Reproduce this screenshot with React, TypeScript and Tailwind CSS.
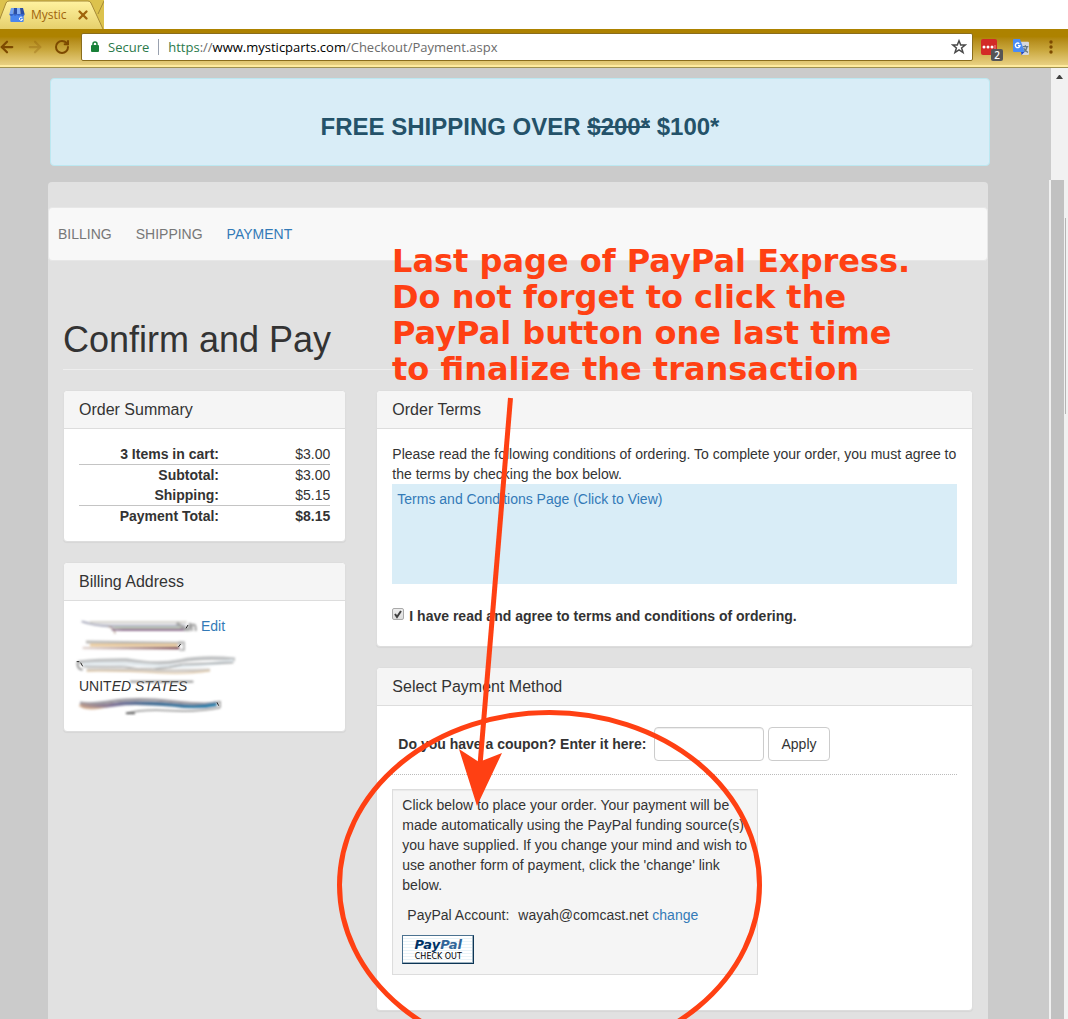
import type { ReactNode } from "react"
import { ArrowLeft, ArrowRight, RotateCw, X } from "lucide-react"

const totals = [
  { label: "3 Items in cart:", value: "$3.00", line: true, strong: false },
  { label: "Subtotal:", value: "$3.00", line: false, strong: false },
  { label: "Shipping:", value: "$5.15", line: true, strong: false },
  { label: "Payment Total:", value: "$8.15", line: false, strong: true },
]

const noteLines = [
  "Last page of PayPal Express.",
  "Do not forget to click the",
  "PayPal button one last time",
  "to finalize the transaction",
]

function StoreIcon() {
  return (
    <svg className="h-4 w-4 shrink-0" viewBox="0 0 48 48" aria-hidden="true">
      <path d="M4 20h40v22a3 3 0 0 1-3 3H7a3 3 0 0 1-3-3z" fill="#4a86ee" />
      <path d="M6 3h9l-2 19H1z" fill="#6fa0f5" />
      <path d="M15 3h9v19H13z" fill="#2b4fa5" />
      <path d="M24 3h9l2 19H24z" fill="#86b0f7" />
      <path d="M33 3h9l5 19H35z" fill="#2b4fa5" />
      <path
        d="M1 21a6 6 0 0 0 12 0M13 21a5.500 5.500 0 0 0 11 0M24 21a5.500 5.500 0 0 0 11 0M35 21a6 6 0 0 0 12 0"
        fill="#3564c9"
      />
      <path d="M40 32a5 5 0 1 0 1 5h-5" fill="none" stroke="#fff" strokeWidth="3" />
    </svg>
  )
}

function TranslateIcon() {
  return (
    <svg className="h-4 w-4" viewBox="0 0 48 48" aria-hidden="true">
      <path d="M17 8h28a3 3 0 0 1 3 3v34a3 3 0 0 1-3 3H27z" fill="#d6d9dd" />
      <path d="M29 23h17M37 19v4M42 23c-1 8-6 14-12 17M32 27c2 6 7 11 13 13" fill="none" stroke="#667a84" strokeWidth="4" />
      <path d="M24 39h10l-8 9z" fill="#2446c8" />
      <path d="M3 0h18l14 39H3a3 3 0 0 1-3-3V3a3 3 0 0 1 3-3z" fill="#4a8cf5" />
      <path d="M19 14a7 7 0 1 0 2 6h-6" fill="none" stroke="#fff" strokeWidth="4" />
    </svg>
  )
}

function BrowserBar() {
  return (
    <header className="shrink-0">
      <div className="flex h-[29px] items-end bg-white">
        <div className="relative flex h-full w-[104px] items-center bg-[#dcc24d] pl-[9px] text-[#a0640c]">
          <svg className="absolute inset-0 h-full w-full" viewBox="0 0 104 29" preserveAspectRatio="none" aria-hidden="true">
            <defs>
              <linearGradient id="tab" x1="0" y1="0" x2="0" y2="1">
                <stop offset="0" stopColor="#fff2a0" />
                <stop offset="1" stopColor="#e6d06c" />
              </linearGradient>
            </defs>
            <path d="M-4 29L6 3Q7 1 9 1H88Q90 1 91 3L103 29" fill="url(#tab)" stroke="#a68a37" />
            <path d="M98 14L104 1" stroke="#a68a37" fill="none" />
          </svg>
          <div className="relative flex items-center">
            <StoreIcon />
            <span className="ml-[6px] w-10 overflow-hidden font-['Open_Sans',sans-serif] text-xs whitespace-nowrap">Mystic</span>
            <button type="button" aria-label="Close tab" className="ml-[5px]">
              <X className="h-3.5 w-3.5" strokeWidth={4} />
            </button>
          </div>
        </div>
      </div>
      <div className="flex h-[39px] items-center border-b border-[#a09250] bg-linear-to-b from-[#ad8200] from-20% via-[#c9a73c] via-55% to-[#edd689] pb-[3px] shadow-[inset_0_-2px_0_#ffeb9e]">
        <div className="flex w-[81px] shrink-0 items-center gap-[10px] text-[#7d4a00]">
          <button type="button" aria-label="Back" className="-ml-0.5">
            <ArrowLeft className="h-[18px] w-[18px]" strokeWidth={3} />
          </button>
          <button type="button" aria-label="Forward" className="opacity-25">
            <ArrowRight className="h-[18px] w-[18px]" strokeWidth={3} />
          </button>
          <button type="button" aria-label="Reload">
            <RotateCw className="h-4 w-4" strokeWidth={3} />
          </button>
        </div>
        <div className="flex h-7 min-w-0 flex-1 items-center rounded-[2px] border border-[#8a6d1c] bg-white px-2 font-['Open_Sans',sans-serif] text-[13px]">
          <svg className="h-3 w-[10px] shrink-0" viewBox="0 0 10 12" aria-hidden="true">
            <rect x="1" y="4" width="8" height="7" rx="1" fill="#188038" />
            <path d="M3 5V3a2 2 0 0 1 4 0v2" fill="none" stroke="#188038" strokeWidth="1.500" />
          </svg>
          <span className="ml-2 text-[#2b7a4b]">Secure</span>
          <span className="mx-[9px] h-4 w-px bg-gray-400" />
          <span className="flex-1 truncate text-[#6b6b6b]">
            <span className="text-[#2b7a4b]">https</span>://<span className="text-black">www.mysticparts.com</span>/Checkout/Payment.aspx
          </span>
          <button type="button" aria-label="Bookmark this page" className="-mr-[3px]">
            <svg className="h-4 w-4" viewBox="0 0 16 16" fill="none" stroke="#4a4a4a" strokeWidth="1.500" aria-hidden="true">
              <path d="M8 1.800L9.700 6H14.200L10.600 8.900L12 13.500L8 10.800L4 13.500L5.400 8.900L1.800 6H6.300z" />
            </svg>
          </button>
        </div>
        <div className="flex w-[95px] shrink-0 items-center pl-2">
          <button type="button" aria-label="Passwords" className="relative h-4 w-4 rounded-[2px] bg-[#d32a26]">
            <svg className="h-4 w-4" viewBox="0 0 16 16" aria-hidden="true">
              <circle cx="3" cy="8" r="1.500" fill="#fff" />
              <circle cx="7" cy="8" r="1.500" fill="#fff" />
              <circle cx="11" cy="8" r="1.500" fill="#fff" />
              <path d="M14 6v4" stroke="#ef8f8d" />
            </svg>
            <span className="absolute top-[10px] left-[10px] flex h-3 w-3 items-center justify-center rounded-[2px] bg-[#555] font-['Open_Sans',sans-serif] text-[10px] font-semibold text-white">
              2
            </span>
          </button>
          <button type="button" aria-label="Translate" className="ml-4">
            <TranslateIcon />
          </button>
          <button type="button" aria-label="Menu" className="ml-5">
            <svg className="h-4 w-1" viewBox="0 0 4 16" fill="#7d4a00" aria-hidden="true">
              <circle cx="2" cy="3" r="1.700" />
              <circle cx="2" cy="8" r="1.700" />
              <circle cx="2" cy="13" r="1.700" />
            </svg>
          </button>
        </div>
      </div>
    </header>
  )
}

function ScrollBar() {
  return (
    <div className="relative flex w-[17px] shrink-0 flex-col bg-[#f1f1f1]" aria-hidden="true">
      <div className="flex h-[17px] items-center justify-center">
        <svg className="h-1 w-[7px]" viewBox="0 0 7 4" fill="#404040">
          <path d="M3 0h1l3 4H0z" />
        </svg>
      </div>
      <div className="mt-[95px] w-[13px] flex-1 bg-[#c1c1c1]" />
      <div className="absolute top-[150px] right-[2px] h-[196px] w-px bg-[#b5b5b5]" />
      <div className="absolute top-[112px] -left-0.5 h-full w-0.5 bg-[#f1f1f1]" />
    </div>
  )
}

function Panel({ title, children }: { title: string; children: ReactNode }) {
  return (
    <section className="mb-5 rounded border border-[#ddd] bg-white shadow-[0_1px_1px_rgba(0,0,0,0.05)]">
      <h2 className="rounded-t border-b border-[#ddd] bg-[#f5f5f5] px-[15px] py-[10px] text-base leading-[17px]">{title}</h2>
      <div className="relative p-[15px]">{children}</div>
    </section>
  )
}

/* Smeared strokes over the private address lines */
function Smudges() {
  return (
    <svg className="pointer-events-none absolute top-0 left-0 h-[130px] w-[281px]" viewBox="42 138 843 390" fill="none" aria-hidden="true">
      <defs>
        <filter id="smear" x="-10%" y="-60%" width="120%" height="220%">
          <feGaussianBlur stdDeviation="2.600" />
        </filter>
        <linearGradient id="blue" gradientUnits="userSpaceOnUse" x1="88" y1="0" x2="505" y2="0">
          <stop offset="0" stopColor="#b99a8c" />
          <stop offset="0.250" stopColor="#7d7396" />
          <stop offset="0.500" stopColor="#466c92" />
          <stop offset="1" stopColor="#2f83ad" />
        </linearGradient>
        <linearGradient id="fade" gradientUnits="userSpaceOnUse" x1="95" y1="0" x2="220" y2="0">
          <stop offset="0" stopColor="#7d587f" stopOpacity="0" />
          <stop offset="1" stopColor="#7d587f" />
        </linearGradient>
        <linearGradient id="brown" gradientUnits="userSpaceOnUse" x1="95" y1="0" x2="385" y2="0">
          <stop offset="0" stopColor="#a07868" stopOpacity="0.300" />
          <stop offset="1" stopColor="#743e48" />
        </linearGradient>
      </defs>
      <g filter="url(#smear)">
        <path d="M95 199H410V224H195Q150 212 95 199z" fill="#e9e9ec" />
        <path d="M120 201H410" stroke="#cfccc5" strokeWidth="5" />
        <path d="M95 199Q135 214 190 213H405" stroke="#a9abbc" strokeWidth="6" />
        <path d="M175 214Q195 220 195 236" stroke="#b5a195" strokeWidth="4" />
        <path d="M192 218H405" stroke="#c8dfb2" strokeWidth="3" />
        <path d="M185 224H410" stroke="url(#fade)" strokeWidth="7" />
        <path d="M380 204L412 226M422 204L414 228" stroke="#a5a5a5" strokeWidth="9" />
        <path d="M425 228V212Q438 200 437 228" stroke="#8f8f8f" strokeWidth="5" />
        <path d="M108 261L395 265" stroke="#bdbbb7" strokeWidth="9" />
        <path d="M120 270H382" stroke="#ecc995" strokeWidth="7" />
        <path d="M98 279H388" stroke="url(#brown)" strokeWidth="7" />
        <path d="M385 262H402V285H388" stroke="#aaa" strokeWidth="5" />
        <path d="M85 322Q150 314 230 315Q320 332 390 318T555 313" stroke="#bfc1c2" strokeWidth="11" />
        <path d="M100 328Q200 322 300 331T550 318" stroke="#e3eaee" strokeWidth="10" />
        <path d="M100 335H220Q310 352 400 328L550 323" stroke="#777" strokeWidth="3" />
        <path d="M110 344Q220 343 300 346T480 345" stroke="#cfcbc6" strokeWidth="9" />
        <path d="M110 348Q230 347 320 353T480 347" stroke="#dfc5a0" strokeWidth="4" />
        <path d="M82 322Q82 345 98 344" stroke="#888" strokeWidth="5" />
        <path d="M240 380H430" stroke="#8a8a8a" strokeWidth="5" />
        <path d="M90 448Q115 468 190 446" stroke="#d9b497" strokeWidth="12" />
        <path d="M90 444Q120 450 190 439T370 440T500 442" stroke="#9e9ba3" strokeWidth="9" />
        <path d="M95 450Q150 456 200 448T370 450Q440 460 500 448" stroke="url(#blue)" strokeWidth="11" />
        <path d="M230 475Q280 462 360 467T510 458" stroke="#a3a3a3" strokeWidth="5" />
        <path d="M228 475H255" stroke="#222" strokeWidth="4" />
        <path d="M500 440H510V458" stroke="#8a8a8a" strokeWidth="4" />
      </g>
      <path d="M80 320H88M92 323L98 334M408 220L414 210M385 276L392 267M501 442L506 452" stroke="#222" strokeWidth="3" />
    </svg>
  )
}

function PayPalButton() {
  return (
    <button
      type="button"
      className="flex h-[29px] w-[72px] flex-col items-center justify-center border border-[#4b7290] border-r-[#0d3555] border-b-[#0d3555] bg-[repeating-linear-gradient(180deg,#ffffff_0px,#ffffff_2px,#e8f3f8_2px,#e8f3f8_3px)] font-['DejaVu_Sans',sans-serif] shadow-[inset_-1px_-1px_0_#9eb3c1]"
    >
      <span className="text-[13px] leading-[15px] font-bold text-[#336699] italic">
        <span className="text-[#003366]">Pay</span>Pal
      </span>
      <span className="text-[8px] leading-[10px] text-black">CHECK OUT</span>
    </button>
  )
}

function OrderSummary() {
  return (
    <Panel title="Order Summary">
      <table className="w-full border-collapse">
        <tbody>
          {totals.map((row) => (
            <tr key={row.label} className={row.line ? "border-b border-[#c4c4c4]" : ""}>
              <th scope="row" className="w-[140px] p-0 text-right font-bold">{row.label}</th>
              <td className={`p-0 text-right ${row.strong ? "font-bold" : ""}`}>{row.value}</td>
            </tr>
          ))}
        </tbody>
      </table>
    </Panel>
  )
}

function BillingAddress() {
  return (
    <Panel title="Billing Address">
      <address className="h-[100px] not-italic">
        <div className="mb-10 pl-[122px]">
          <a href="#edit" className="text-[#337ab7]">Edit</a>
        </div>
        <div>
          UNIT<span className="italic">ED STATES</span>
        </div>
      </address>
      <Smudges />
    </Panel>
  )
}

function OrderTerms() {
  return (
    <Panel title="Order Terms">
      <p>
        Please read the following conditions of ordering. To complete your order, you must agree to the terms by checking the
        box below.
      </p>
      <div className="mb-[22px] h-[100px] bg-[#d9edf7] p-[5px]">
        <a href="#terms" className="text-[#337ab7]">Terms and Conditions Page (Click to View)</a>
      </div>
      <label className="mb-[5px] flex gap-[5px] font-bold">
        <span className="relative mt-0.5 h-3 w-3 shrink-0">
          <input
            type="checkbox"
            defaultChecked
            className="peer block h-3 w-3 appearance-none rounded-[2px] border border-[#a9a9a9] bg-linear-to-b from-[#eee] to-[#ddd]"
          />
          <svg className="pointer-events-none absolute inset-0 hidden h-3 w-3 peer-checked:block" viewBox="0 0 12 12" aria-hidden="true">
            <path d="M3 6l2 3 4-6" fill="none" stroke="#404040" strokeWidth="2" />
          </svg>
        </span>
        I have read and agree to terms and conditions of ordering.
      </label>
    </Panel>
  )
}

function PaymentMethod() {
  return (
    <Panel title="Select Payment Method">
      <form className="flex h-[54px] items-center gap-1 border-b border-dotted border-[#bbb] pb-2 pl-[6px]">
        <label htmlFor="coupon" className="mr-1 font-bold">Do you have a coupon? Enter it here:</label>
        <input
          id="coupon"
          type="text"
          className="h-[34px] w-[110px] rounded border border-[#ccc] bg-white px-3 shadow-[inset_0_1px_1px_rgba(0,0,0,0.075)]"
        />
        <button type="button" className="h-[34px] rounded border border-[#ccc] bg-white px-3">Apply</button>
      </form>
      <div className="mt-[14px] mb-5 w-[366px] border border-[#ddd] bg-[#f5f5f5] px-[9px] pt-[5px] pb-[10px] shadow-[inset_0_1px_1px_rgba(0,0,0,0.05)]">
        <p className="mb-[10px]">
          Click below to place your order. Your payment will be made automatically using the PayPal funding source(s) you have
          supplied. If you change your mind and wish to use another form of payment, click the 'change' link below.
        </p>
        <p className="mb-[10px] pl-[5px]">
          <span className="mr-[9px]">PayPal Account:</span>
          wayah@comcast.net <a href="#change" className="text-[#337ab7]">change</a>
        </p>
        <PayPalButton />
      </div>
    </Panel>
  )
}

/* Red note, arrow and circle drawn over the page */
function Annotation() {
  return (
    <div className="pointer-events-none absolute inset-0 overflow-hidden text-[#ff4013]">
      <div className="absolute top-[175px] left-[392px] font-['DejaVu_Sans',sans-serif] text-[32px] leading-9 font-bold whitespace-nowrap">
        {noteLines.map((line) => (
          <div key={line}>{line}</div>
        ))}
      </div>
      <svg className="absolute top-0 left-0 h-[1000px] w-[800px]" viewBox="0 68 800 1000" fill="none" aria-hidden="true">
        <path d="M510.500 398L480 765" stroke="currentColor" strokeWidth="5" />
        <path d="M459 749L479 762L502 753L477 806z" fill="currentColor" />
        <ellipse cx="549.500" cy="885" rx="210" ry="172.500" stroke="currentColor" strokeWidth="5" />
      </svg>
    </div>
  )
}

export default function App() {
  return (
    <div className="flex h-screen flex-col overflow-hidden bg-[#cbcbcb] font-['Liberation_Sans',Arial,sans-serif] text-sm leading-5 text-[#333]">
      <BrowserBar />
      <div className="relative flex min-h-0 flex-1">
        <main className="min-w-0 flex-1 overflow-hidden pt-[10px]">
          <div className="mr-[61px] ml-[50px] rounded border border-[#bce8f1] bg-[#d9edf7] pt-[35px] pb-[25px] text-center text-2xl leading-[26px] font-bold text-[#245269]">
            <p>
              FREE SHIPPING OVER <s>$200*</s> $100*
            </p>
          </div>
          <div className="mt-4 mr-[63px] ml-12 rounded bg-[#e1e1e1] pt-[25px] pb-5">
            <nav className="flex min-h-[54px] items-center gap-6 rounded border border-[#e7e7e7] bg-[#f8f8f8] px-[9px] text-[#777]">
              <a href="#billing">BILLING</a>
              <a href="#shipping">SHIPPING</a>
              <a href="#payment" className="text-[#337ab7]">PAYMENT</a>
            </nav>
            <div className="px-[15px]">
              <h1 className="mt-[59px] border-b border-[#eee] pb-[9px] text-[36px] leading-10">Confirm and Pay</h1>
            </div>
            <div className="mt-5 flex items-start">
              <div className="w-1/3 px-[15px]">
                <OrderSummary />
                <BillingAddress />
              </div>
              <div className="w-2/3 px-[15px]">
                <OrderTerms />
                <PaymentMethod />
              </div>
            </div>
          </div>
        </main>
        <ScrollBar />
        <Annotation />
      </div>
    </div>
  )
}
